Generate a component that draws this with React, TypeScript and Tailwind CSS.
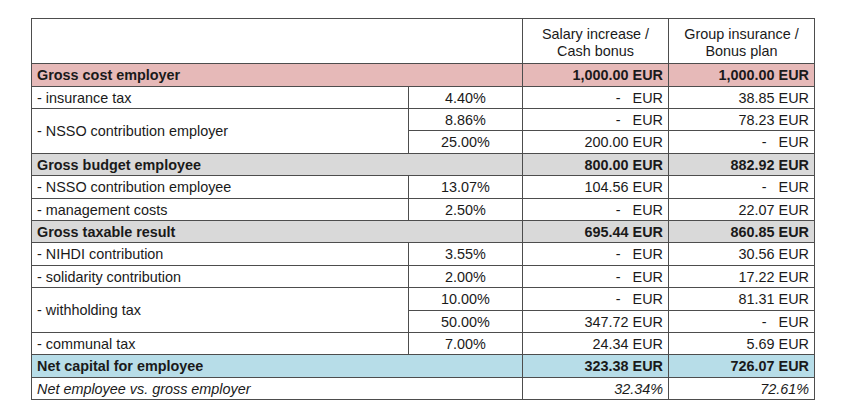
type Row =
  | { kind: 'total'; label: string; a: string; b: string; tone: 'pink' | 'gray' | 'blue'; h: string }
  | { kind: 'line'; label?: string; span?: number; pct: string; a: string; b: string; h: string }

const rows: Row[] = [
  { kind: 'total', label: 'Gross cost employer', a: '1,000.00 EUR', b: '1,000.00 EUR', tone: 'pink', h: 'h-[23px]' },
  { kind: 'line', label: '- insurance tax', pct: '4.40%', a: '-', b: '38.85 EUR', h: 'h-[22px]' },
  { kind: 'line', label: '- NSSO contribution employer', span: 2, pct: '8.86%', a: '-', b: '78.23 EUR', h: 'h-[22px]' },
  { kind: 'line', pct: '25.00%', a: '200.00 EUR', b: '-', h: 'h-[23px]' },
  { kind: 'total', label: 'Gross budget employee', a: '800.00 EUR', b: '882.92 EUR', tone: 'gray', h: 'h-[22px]' },
  { kind: 'line', label: '- NSSO contribution employee', pct: '13.07%', a: '104.56 EUR', b: '-', h: 'h-[23px]' },
  { kind: 'line', label: '- management costs', pct: '2.50%', a: '-', b: '22.07 EUR', h: 'h-[22px]' },
  { kind: 'total', label: 'Gross taxable result', a: '695.44 EUR', b: '860.85 EUR', tone: 'gray', h: 'h-[22px]' },
  { kind: 'line', label: '- NIHDI contribution', pct: '3.55%', a: '-', b: '30.56 EUR', h: 'h-[23px]' },
  { kind: 'line', label: '- solidarity contribution', pct: '2.00%', a: '-', b: '17.22 EUR', h: 'h-[22px]' },
  { kind: 'line', label: '- withholding tax', span: 2, pct: '10.00%', a: '-', b: '81.31 EUR', h: 'h-[23px]' },
  { kind: 'line', pct: '50.00%', a: '347.72 EUR', b: '-', h: 'h-[22px]' },
  { kind: 'line', label: '- communal tax', pct: '7.00%', a: '24.34 EUR', b: '5.69 EUR', h: 'h-[22px]' },
  { kind: 'total', label: 'Net capital for employee', a: '323.38 EUR', b: '726.07 EUR', tone: 'blue', h: 'h-[23px]' },
]

const toneBg = {
  pink: 'bg-[#e6b9b8]',
  gray: 'bg-[#d9d9d9]',
  blue: 'bg-[#b7dde8]',
}

function Amount({ value }: { value: string }) {
  // accounting format: empty value shows a lone dash before the currency
  if (value === '-') {
    return <span className="whitespace-pre">-   EUR</span>
  }
  return <span>{value}</span>
}

const cell = 'border border-[#4d4d4d] px-[5px] py-0 leading-[16px]'

export default function App() {
  return (
    <div className="w-[845px] h-[416px] bg-white pt-[18px] pl-[31px] font-['Liberation_Sans',Arial,sans-serif] text-[14.4px] text-[#1a1a1a]">
      <table className="table-fixed w-[783px]">
        <colgroup>
          <col className="w-[377px]" />
          <col className="w-[114px]" />
          <col className="w-[146px]" />
          <col className="w-[146px]" />
        </colgroup>
        <thead>
          <tr className="h-[45px]">
            <th colSpan={2} className={cell}></th>
            <th className={`${cell} font-normal text-center leading-[17px] pt-[3px]`}>
              Salary increase /<br />Cash bonus
            </th>
            <th className={`${cell} font-normal text-center leading-[17px] pt-[3px]`}>
              Group insurance /<br />Bonus plan
            </th>
          </tr>
        </thead>
        <tbody>
          {rows.map((r, i) =>
            r.kind === 'total' ? (
              <tr key={i} className={`${r.h} ${toneBg[r.tone]} font-bold`}>
                <td colSpan={2} className={`${cell} text-left`}>{r.label}</td>
                <td className={`${cell} text-right`}>{r.a}</td>
                <td className={`${cell} text-right`}>{r.b}</td>
              </tr>
            ) : (
              <tr key={i} className={r.h}>
                {r.label && (
                  <td rowSpan={r.span ?? 1} className={`${cell} text-left align-middle`}>{r.label}</td>
                )}
                <td className={`${cell} text-center`}>{r.pct}</td>
                <td className={`${cell} text-right`}><Amount value={r.a} /></td>
                <td className={`${cell} text-right`}><Amount value={r.b} /></td>
              </tr>
            )
          )}
          <tr className="h-[22px] italic">
            <td colSpan={2} className={`${cell} text-left`}>Net employee vs. gross employer</td>
            <td className={`${cell} text-right`}>32.34%</td>
            <td className={`${cell} text-right`}>72.61%</td>
          </tr>
        </tbody>
      </table>
    </div>
  )
}
